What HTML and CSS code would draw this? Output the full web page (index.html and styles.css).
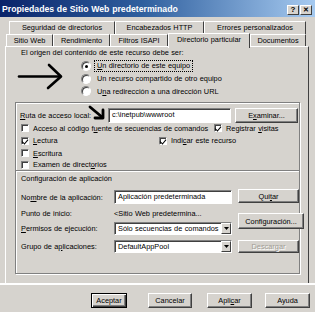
FILE: index.html
```html
<!DOCTYPE html>
<html>
<head>
<meta charset="utf-8">
<link rel="stylesheet" href="styles.css">
</head>
<body>
<div class="window">
  <div class="titlebar">
    <span class="title">Propiedades de Sitio Web predeterminado</span>
    <div class="tbtns">
      <span class="tbtn">?</span>
      <span class="tbtn tx">✕</span>
    </div>
  </div>

  <div class="tabs">
    <div class="tabrow back">
      <div class="tab w1">Seguridad de directorios</div>
      <div class="tab w2">Encabezados HTTP</div>
      <div class="tab w3">Errores personalizados</div>
    </div>
    <div class="tabrow front">
      <div class="tab f1">Sitio Web</div>
      <div class="tab f2">Rendimiento</div>
      <div class="tab f3">Filtros ISAPI</div>
      <div class="tab f4 sel">Directorio particular</div>
      <div class="tab f5">Documentos</div>
    </div>
  </div>

  <div class="panel">
    <div class="heading">El origen del contenido de este recurso debe ser:</div>
    <div class="radios">
      <div class="rrow r1"><span class="radio on"></span><span class="focus"><u>U</u>n directorio de este equipo</span></div>
      <div class="rrow r2"><span class="radio"></span><span>Un recurso compartido de otro equipo</span></div>
      <div class="rrow r3"><span class="radio"></span><span>U<u>n</u>a redirección a una dirección URL</span></div>
    </div>

    <div class="group">
      <div class="ruta">
        <span class="lbl"><u>R</u>uta de acceso local:</span>
        <span class="field wide">c:\inetpub\wwwroot</span>
        <span class="btn examinar">E<u>x</u>aminar...</span>
      </div>
      <div class="checks">
        <div class="crow c1">
          <span class="ccell w194"><span class="cb"></span>Acceso al código f<u>u</u>ente de secuencias de comandos</span>
          <span class="ccell"><span class="cb on"></span>Registrar&nbsp;<u>v</u>isitas</span>
        </div>
        <div class="crow c2">
          <span class="ccell w138"><span class="cb on"></span><u>L</u>ectura</span>
          <span class="ccell"><span class="cb on"></span>Indi<u>c</u>ar este recurso</span>
        </div>
        <div class="crow c3">
          <span class="ccell"><span class="cb"></span><u>E</u>scritura</span>
        </div>
        <div class="crow c4">
          <span class="ccell"><span class="cb"></span>Examen de direct<u>o</u>rios</span>
        </div>
      </div>
      <div class="sep"></div>
      <div class="apphead">Configuración de aplicación</div>
      <div class="appgrid">
        <span class="lbl g1">No<u>m</u>bre de la aplicación:</span>
        <span class="field g1f">Aplicación predeterminada</span>
        <span class="btn quitar">Qui<u>t</u>ar</span>

        <span class="lbl g2">Punto de inicio:</span>
        <span class="plain g2f">&lt;Sitio Web predetermina...</span>
        <span class="btn config">Confi<u>g</u>uración...</span>

        <span class="lbl g3"><u>P</u>ermisos de ejecución:</span>
        <span class="field sel g3f">Sólo secuencias de comandos<span class="dd"><svg width="5" height="3" viewBox="0 0 5 3"><path d="M0 0h5L2.5 3z" fill="#000"/></svg></span></span>

        <span class="lbl g4">Grupo de a<u>p</u>licaciones:</span>
        <span class="field sel g4f">DefaultAppPool<span class="dd"><svg width="5" height="3" viewBox="0 0 5 3"><path d="M0 0h5L2.5 3z" fill="#000"/></svg></span></span>
        <span class="btn disabled descargar">Descargar</span>
      </div>
    </div>

    <svg class="arrow-big" width="50" height="30" viewBox="0 0 50 30">
      <path d="M2 13.5 H43" stroke="#000" stroke-width="2.6" fill="none" stroke-linecap="round"/>
      <path d="M32 2 L44 13.5 L31 25" stroke="#000" stroke-width="2.6" fill="none" stroke-linecap="round" stroke-linejoin="round"/>
    </svg>
    <svg class="arrow-small" width="18" height="16" viewBox="0 0 18 16">
      <path d="M2 2 L14 12" stroke="#000" stroke-width="2.8" fill="none" stroke-linecap="round"/>
      <path d="M7 13 H15 V5" stroke="#000" stroke-width="2.8" fill="none" stroke-linecap="round" stroke-linejoin="round"/>
    </svg>
  </div>
  <div class="whiteline"></div>

  <div class="footer">
    <span class="btn fb aceptar">Aceptar</span>
    <span class="btn fb cancelar">Cancelar</span>
    <span class="btn fb aplicar">Apli<u>c</u>ar</span>
    <span class="btn fb ayuda">Ayuda</span>
  </div>
</div>
</body>
</html>
```
FILE: styles.css
```css
* { box-sizing: border-box; }
html, body { margin: 0; padding: 0; }
body {
  width: 315px;
  height: 312px;
  overflow: hidden;
  background: #d6d3ce;
  font-family: "Liberation Sans", Arial, sans-serif;
  font-size: 7.35px;
  word-spacing: 0.3px;
  color: #000;
}
u { text-decoration: underline; text-underline-offset: 1px; }
.window {
  width: 315px;
  height: 312px;
  background: #d6d3ce;
  display: flex;
  flex-direction: column;
}
.titlebar {
  height: 17px;
  background: linear-gradient(to right, #0a246a 0%, #2f5f9e 45%, #a6caf0 100%);
  display: flex;
  align-items: center;
  justify-content: space-between;
  padding: 0 3px 0 2px;
}
.title {
  color: #fff;
  font-weight: bold;
  font-size: 8.7px;
}
.tbtns { display: flex; gap: 1px; padding-top: 2px; }
.tbtn {
  width: 12px;
  height: 10px;
  background: #d6d3ce;
  border: 1px solid;
  border-color: #fff #404040 #404040 #fff;
  font-size: 8px;
  font-weight: bold;
  line-height: 8px;
  text-align: center;
}
.tbtn.tx { font-size: 7px; }

.tabs {
  height: 29px;
  padding-top: 4px;
  position: relative;
}
.tabrow { display: flex; }
.tab {
  border-top: 1px solid #fff;
  border-left: 1px solid #fff;
  border-right: 1px solid #404040;
  text-align: center;
  background: #d6d3ce;
  white-space: nowrap;
}
.back { height: 13px; margin-left: 9px; }
.back .tab { height: 13px; line-height: 11px; }
.w1 { width: 106px; }
.w2 { width: 89px; }
.w3 { width: 102px; }
.front { height: 12px; margin-left: 6px; align-items: flex-end; }
.front .tab { height: 12px; line-height: 11px; }
.f1 { width: 47px; }
.f2 { width: 57px; }
.f3 { width: 58px; }
.f4 { width: 82px; }
.f5 { width: 56px; }
.front .tab.sel {
  height: 15px;
  margin-bottom: -2px;
  margin-top: -2px;
  line-height: 12px;
  position: relative;
  z-index: 2;
}

.panel {
  margin-left: 5px;
  width: 304px;
  height: 237px;
  border-top: 1px solid #fff;
  border-left: 1px solid #fff;
  border-right: 1px solid #404040;
  position: relative;
  padding-left: 9px;
}
.heading {
  margin-top: 1px;
  margin-left: 6px;
  height: 10px;
  line-height: 10px;
}
.radios { margin-top: 2px; margin-left: 66px; }
.rrow { display: flex; align-items: center; gap: 6px; }
.r1 { height: 12px; }
.r2 { height: 13px; }
.r3 { height: 12px; }
.radio {
  width: 10px;
  height: 10px;
  border-radius: 50%;
  background: #fff;
  border: 1px solid;
  border-color: #808080 #fff #fff #808080;
  box-shadow: inset 1px 1px 0 #404040;
  position: relative;
}
.radio.on::after {
  content: "";
  position: absolute;
  left: 2.5px;
  top: 2.5px;
  width: 3px;
  height: 3px;
  border-radius: 50%;
  background: #000;
}
.focus {
  outline: 1px dotted #000;
  outline-offset: 0px;
  padding: 0 2px;
  margin-left: -2px;
  line-height: 10px;
}

.group {
  margin-top: 5px;
  width: 285px;
  height: 172px;
  border: 1px solid #808080;
  box-shadow: inset 1px 1px 0 #fff, 1px 1px 0 #fff;
  padding-left: 5px;
}
.ruta {
  margin-top: 5px;
  height: 14px;
  display: flex;
  align-items: center;
}
.lbl { width: 87px; white-space: nowrap; }
.ruta .lbl { width: 88px; margin-left: -1px; }
.field {
  background: #fff;
  border: 1px solid;
  border-color: #808080 #fff #fff #808080;
  box-shadow: inset 1px 1px 0 #404040;
  height: 14px;
  line-height: 12px;
  padding-left: 3px;
  white-space: nowrap;
  overflow: hidden;
  position: relative;
}
.field.wide { width: 123px; height: 15px; margin-top: 1px; }
.btn {
  background: #d6d3ce;
  border: 1px solid;
  border-color: #fff #404040 #404040 #fff;
  box-shadow: inset -1px -1px 0 #808080;
  text-align: center;
  white-space: nowrap;
  display: flex;
  align-items: center;
  justify-content: center;
}
.examinar { width: 63px; height: 15px; margin-left: 4px; margin-top: 1px; }

.checks { margin-top: 0; }
.crow { display: flex; align-items: center; }
.c1 { height: 12px; }
.c2 { height: 13px; }
.c3 { height: 12px; }
.c4 { height: 11px; }
.ccell { display: flex; align-items: center; white-space: nowrap; }
.w194 { width: 193px; }
.w138 { width: 138px; }
.cb {
  width: 8px;
  height: 8px;
  background: #fff;
  border: 1px solid;
  border-color: #808080 #fff #fff #808080;
  box-shadow: inset 1px 1px 0 #404040;
  margin-right: 4px;
  position: relative;
}
.cb.on::after {
  content: "";
  position: absolute;
  left: 1px;
  top: 0px;
  width: 3px;
  height: 5px;
  border-right: 1.6px solid #000;
  border-bottom: 1.6px solid #000;
  transform: rotate(40deg);
}
.sep {
  margin-left: -5px;
  width: 283px;
  height: 2px;
  border-top: 1px solid #808080;
  border-bottom: 1px solid #fff;
}
.apphead {
  height: 12px;
  line-height: 12px;
  margin-top: 1px;
}
.appgrid {
  margin-top: 5px;
  display: grid;
  grid-template-columns: 87px 118px 66px;
  grid-template-rows: 14px 17px 15px 19px;
  column-gap: 6px;
  align-items: center;
}
.g1 { grid-row: 1; grid-column: 1; }
.g1f { grid-row: 1; grid-column: 2; }
.quitar { grid-row: 1; grid-column: 3; width: 61px; height: 14px; margin-top: -2px; }
.g2 { grid-row: 2; grid-column: 1; margin-top: 1px; }
.g2f { grid-row: 2; grid-column: 2; white-space: nowrap; margin-top: 1px; }
.config { grid-row: 2 / 4; grid-column: 3; width: 66px; height: 16px; margin-top: 2px; }
.g3 { grid-row: 3; grid-column: 1; }
.g3f { grid-row: 3; grid-column: 2; height: 13px; line-height: 11px; }
.g4 { grid-row: 4; grid-column: 1; margin-top: 2px; }
.g4f { grid-row: 4; grid-column: 2; height: 13px; line-height: 11px; margin-top: 2px; }
.descargar { grid-row: 4; grid-column: 3; width: 61px; height: 13px; margin-top: 2px; }
.disabled { color: #a09c94; text-shadow: 1px 1px 0 #fff; }
.dd {
  position: absolute;
  right: 0;
  top: 0;
  width: 10px;
  height: 11px;
  background: #d6d3ce;
  border: 1px solid;
  border-color: #fff #404040 #404040 #fff;
  display: flex;
  align-items: center;
  justify-content: center;
}

.arrow-big { position: absolute; left: 11px; top: 16px; }
.arrow-small { position: absolute; left: 82px; top: 58px; }

.whiteline {
  height: 2px;
  background: #fff;
  width: 315px;
}
.footer {
  display: flex;
  margin-top: 8px;
  height: 16px;
  padding-left: 91px;
}
.fb { height: 15px; }
.aceptar { width: 36px; border: 1px solid #000; box-shadow: inset 1px 1px 0 #fff, inset -1px -1px 0 #404040, inset -2px -2px 0 #808080; }
.cancelar { width: 44px; margin-left: 21px; }
.aplicar { width: 45px; margin-left: 15px; }
.ayuda { width: 45px; margin-left: 13px; }
```
